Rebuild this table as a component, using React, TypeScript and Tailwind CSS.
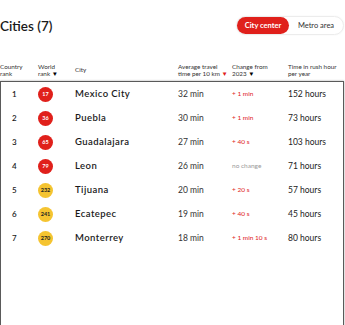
import React from "react";

type Row = { c: number; w: number; city: string; avg: string; chg: string; hrs: string };

const rows: Row[] = [
  { c: 1, w: 17, city: "Mexico City", avg: "32 min", chg: "+ 1 min", hrs: "152 hours" },
  { c: 2, w: 36, city: "Puebla", avg: "30 min", chg: "+ 1 min", hrs: "73 hours" },
  { c: 3, w: 65, city: "Guadalajara", avg: "27 min", chg: "+ 40 s", hrs: "103 hours" },
  { c: 4, w: 79, city: "Leon", avg: "26 min", chg: "no change", hrs: "71 hours" },
  { c: 5, w: 232, city: "Tijuana", avg: "20 min", chg: "+ 20 s", hrs: "57 hours" },
  { c: 6, w: 241, city: "Ecatepec", avg: "19 min", chg: "+ 40 s", hrs: "45 hours" },
  { c: 7, w: 270, city: "Monterrey", avg: "18 min", chg: "+ 1 min 10 s", hrs: "80 hours" },
];

const grid = "grid grid-cols-[38px_37px_103px_54px_56px_1fr] items-center";

export default function App() {
  return (
    <div className="w-[345px] h-[325px] overflow-hidden bg-white text-[#1a1a1a]" style={{ fontFamily: "Lato, 'Open Sans', sans-serif" }}>
      <div className="flex items-center justify-between pt-[16px] pr-[1px]">
        <div className="text-[13.5px] font-semibold leading-[18px]">Cities (7)</div>
        <div className="flex items-center rounded-full border border-[#ececec] shadow-[0_0_2px_rgba(0,0,0,0.06)]">
          <div className="h-[17px] w-[52px] rounded-full bg-[#e0201b] text-white text-[7.5px] font-bold flex items-center justify-center">City center</div>
          <div className="h-[17px] w-[54px] rounded-full text-[#333] text-[7.5px] flex items-center justify-center">Metro area</div>
        </div>
      </div>
      <div className={`${grid} mt-[25px] h-[20px] text-[6.3px] leading-[7.5px] text-[#333]`}>
        <div>Country<br />rank</div>
        <div>World<br />rank <span className="text-black">▼</span></div>
        <div>City</div>
        <div>Average travel<br />time per 10 km <span className="text-[#e0201b]">▼</span></div>
        <div>Change from<br />2023 <span className="text-black">▼</span></div>
        <div>Time in rush hour<br />per year</div>
      </div>
      <div className="mt-[1px] h-[260px] w-[344px] border border-[#5a5a5a] shadow-[0_0_2px_rgba(0,0,0,0.35)]">
        {rows.map((r) => (
          <div key={r.c} className={`${grid} h-[24px] -ml-[1px]`}>
            <div className="pl-[12px] text-[8px] font-semibold">{r.c}</div>
            <div>
              <div
                className={`w-[15px] h-[15px] rounded-full flex items-center justify-center text-[5.5px] font-bold ${r.w < 100 ? "bg-[#e0201b] text-white" : "bg-[#f5c431] text-[#222]"}`}
              >
                {r.w}
              </div>
            </div>
            <div className="text-[9.5px] font-semibold tracking-[0.45px]">{r.city}</div>
            <div className="text-[8.5px] text-[#333]">{r.avg}</div>
            <div className={`text-[6.5px] ${r.chg === "no change" ? "text-[#999]" : "text-[#e0201b]"}`}>{r.chg}</div>
            <div className="text-[8.5px] text-[#222]">{r.hrs}</div>
          </div>
        ))}
      </div>
    </div>
  );
}
